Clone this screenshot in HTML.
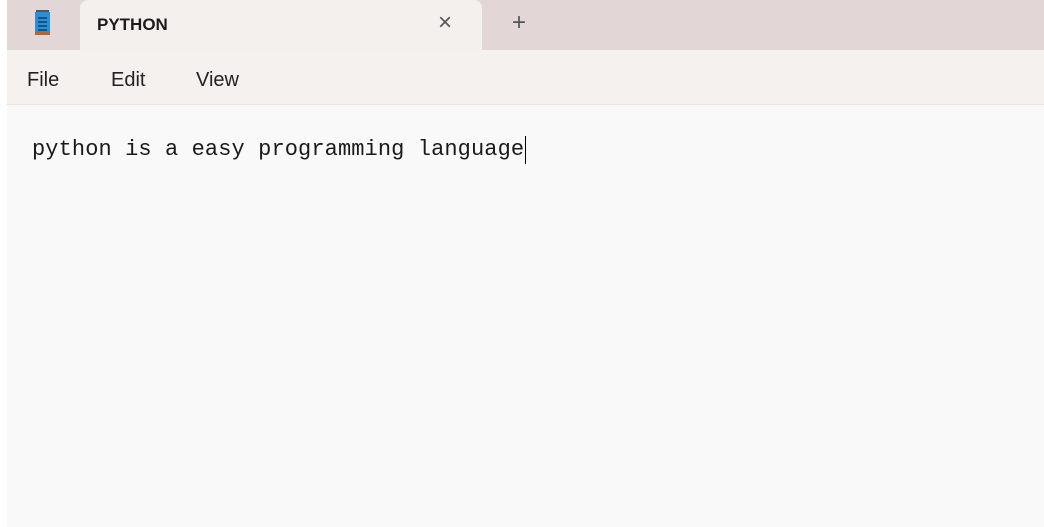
<!DOCTYPE html>
<html><head><style>
body{margin:0;width:1044px;height:527px;background:#fff;position:relative;overflow:hidden;font-family:"Liberation Sans",sans-serif}
#top{position:absolute;left:7px;top:0;right:0;height:50px;background:#e2d6d6}
#tab{position:absolute;left:80px;top:0;width:402px;height:50px;background:#f4f0ee;border-radius:8px 8px 0 0}
#menu{position:absolute;left:7px;top:50px;right:0;height:54px;background:#f5f1ef;border-bottom:1px solid #e6e3e2}
#ed{position:absolute;left:7px;top:105px;right:0;bottom:0;background:#f9f9f9}
.t{position:absolute;color:#222}
</style></head><body>
<div id="top"></div><div id="tab"></div><div id="menu"></div><div id="ed"></div>
<svg style="position:absolute;left:33px;top:9px" width="20" height="28"><rect x="2" y="3" width="15" height="22" fill="#2b8fd8"/><rect x="2" y="23" width="15" height="3" fill="#b5652b"/><g stroke="#0d3f6e" stroke-width="1.5"><line x1="5" y1="9" x2="14" y2="9"/><line x1="5" y1="13" x2="14" y2="13"/><line x1="5" y1="17" x2="14" y2="17"/><line x1="5" y1="21" x2="14" y2="21"/></g><rect x="3" y="1" width="13" height="2" fill="#555"/></svg>
<div class="t" style="left:97px;top:15px;font-size:17px;font-weight:bold;color:#1c1c1c">PYTHON</div>
<div class="t" style="left:438px;top:9px;font-size:24px;color:#555">×</div>
<div class="t" style="left:512px;top:9px;font-size:24px;color:#555">+</div>
<div class="t" style="left:27px;top:69px;font-size:20px">File</div>
<div class="t" style="left:111px;top:69px;font-size:20px">Edit</div>
<div class="t" style="left:196px;top:69px;font-size:20px">View</div>
<div class="t" style="left:32px;top:137px;font-family:'Liberation Mono',monospace;font-size:22px;letter-spacing:0.1px;color:#1a1a1a">python is a easy programming language</div>
<div style="position:absolute;left:525px;top:136px;width:1px;height:28px;background:#000"></div>
</body></html>
